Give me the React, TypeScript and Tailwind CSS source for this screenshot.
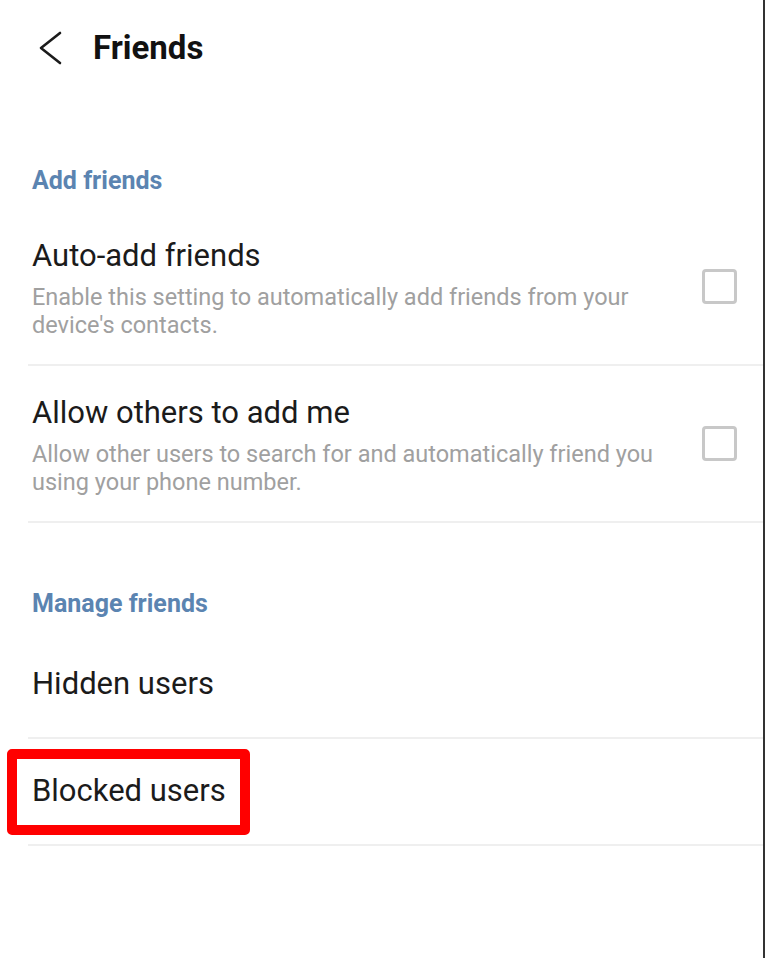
const font = { fontFamily: "Roboto, 'Noto Sans', sans-serif" };

function SectionHeader({ label, top }: { label: string; top: string }) {
  return (
    <div className={`${top} pb-[13px] pl-8`}>
      <div className="h-[30px] leading-[30px] text-[25px] font-bold text-[#5b84b1]">{label}</div>
    </div>
  );
}

function CheckRow({ title, desc }: { title: string; desc: string[] }) {
  return (
    <div className="flex items-center border-b-2 border-[#efefef] ml-7">
      <div className="flex-1 pl-1 pt-[29px] pb-[25px]">
        <div className="h-9 leading-9 text-[31px] text-[#1b1b1b]">{title}</div>
        <div className="mt-[9px] text-[23.5px] leading-7 text-[#a0a0a0]">
          {desc.map((d) => (
            <div key={d}>{d}</div>
          ))}
        </div>
      </div>
      <div className="w-[35px] h-[35px] rounded-[4px] border-[3px] border-[#c8c8c8] mr-[26px]" />
    </div>
  );
}

function LinkRow({ title, highlight }: { title: string; highlight?: boolean }) {
  return (
    <div className="relative h-[107px] flex items-center border-b-2 border-[#efefef] ml-7">
      <div className="pl-1 text-[31px] text-[#1b1b1b]">{title}</div>
      {highlight && (
        <div className="absolute left-[-21px] top-[10px] w-[243px] h-[86px] border-[10px] border-[#f00] rounded-[5px]" />
      )}
    </div>
  );
}

export default function App() {
  return (
    <div style={font} className="w-[765px] h-[958px] bg-white border-r-2 border-[#333] overflow-hidden">
      <header className="h-24 flex items-center">
        <svg className="ml-[38px] w-6 h-[34px]" viewBox="0 0 24 34" fill="none">
          <polyline points="22,2 3,17 22,32" stroke="#1b1b1b" strokeWidth="2.6" strokeLinecap="round" strokeLinejoin="round" />
        </svg>
        <h1 className="ml-[31px] text-[33px] font-bold text-[#111]">Friends</h1>
      </header>

      <SectionHeader label="Add friends" top="pt-[70px]" />
      <CheckRow
        title="Auto-add friends"
        desc={["Enable this setting to automatically add friends from your", "device's contacts."]}
      />
      <CheckRow
        title="Allow others to add me"
        desc={["Allow other users to search for and automatically friend you", "using your phone number."]}
      />

      <SectionHeader label="Manage friends" top="pt-[66px]" />
      <LinkRow title="Hidden users" />
      <LinkRow title="Blocked users" highlight />
    </div>
  );
}
